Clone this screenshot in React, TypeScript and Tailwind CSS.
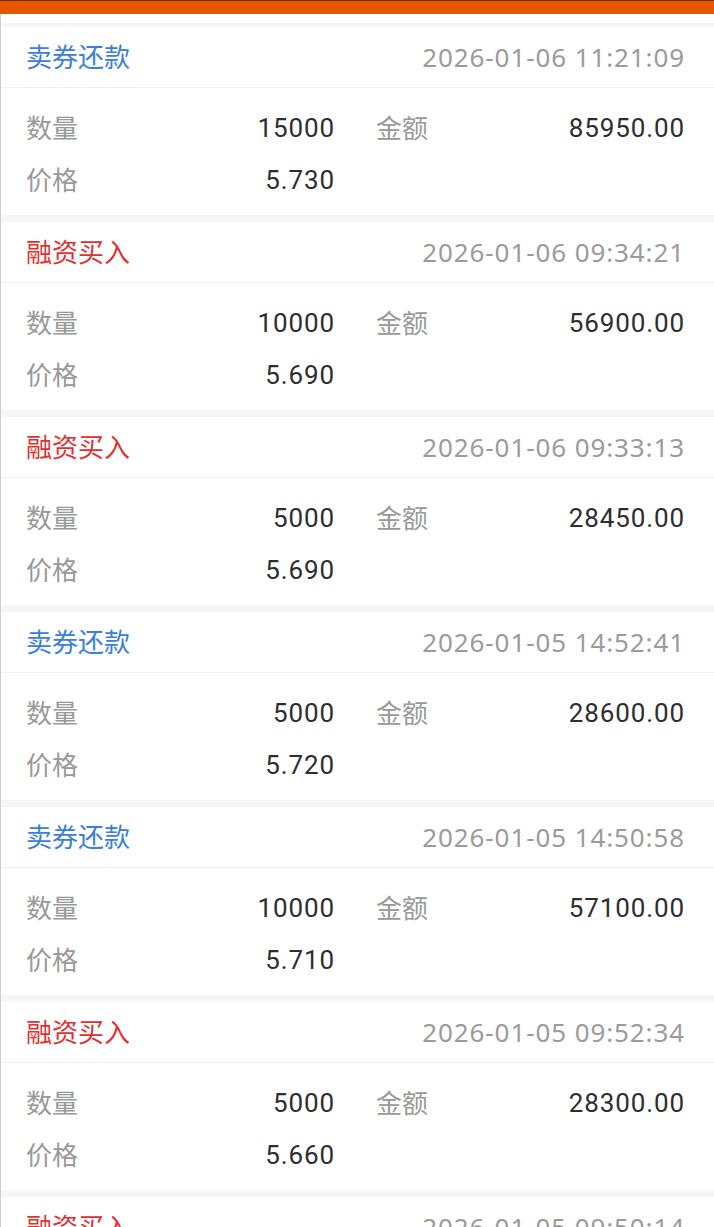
import React from "react";

type Rec = {
  type: "sell" | "buy";
  time: string;
  qty: string;
  amount: string;
  price: string;
};

const records: Rec[] = [
  { type: "sell", time: "2026-01-06 11:21:09", qty: "15000", amount: "85950.00", price: "5.730" },
  { type: "buy", time: "2026-01-06 09:34:21", qty: "10000", amount: "56900.00", price: "5.690" },
  { type: "buy", time: "2026-01-06 09:33:13", qty: "5000", amount: "28450.00", price: "5.690" },
  { type: "sell", time: "2026-01-05 14:52:41", qty: "5000", amount: "28600.00", price: "5.720" },
  { type: "sell", time: "2026-01-05 14:50:58", qty: "10000", amount: "57100.00", price: "5.710" },
  { type: "buy", time: "2026-01-05 09:52:34", qty: "5000", amount: "28300.00", price: "5.660" },
  { type: "buy", time: "2026-01-05 09:50:14", qty: "5000", amount: "28300.00", price: "5.660" },
];

const numFont = { fontFamily: 'Roboto, "Noto Sans", sans-serif' };

function Card({ r }: { r: Rec }) {
  return (
    <div className="bg-white">
      <div className="h-[61px] flex items-center justify-between pl-[25px] pr-[30px] border-b border-[#f0f0f0]">
        <span
          className={
            r.type === "sell"
              ? "text-[26px] leading-none text-[#3a80d9]"
              : "text-[26px] leading-none text-[#e0302f]"
          }
        >
          {r.type === "sell" ? "卖券还款" : "融资买入"}
        </span>
        <span className="text-[26px] leading-none text-[#9b9b9b] tracking-[0.9px] mr-[-1px]">{r.time}</span>
      </div>
      <div className="pl-[25px] pr-[30px] pt-[14px] pb-[9px] grid grid-cols-2 gap-x-[42px]">
        <div className="h-[52px] flex items-center justify-between">
          <span className="text-[26px] leading-none text-[#999]">数量</span>
          <span className="text-[26px] leading-none text-[#2e2e2e] tracking-[0.9px] mr-[-1px]" style={numFont}>
            {r.qty}
          </span>
        </div>
        <div className="h-[52px] flex items-center justify-between">
          <span className="text-[26px] leading-none text-[#999]">金额</span>
          <span className="text-[26px] leading-none text-[#2e2e2e] tracking-[0.9px] mr-[-1px]" style={numFont}>
            {r.amount}
          </span>
        </div>
        <div className="h-[52px] flex items-center justify-between">
          <span className="text-[26px] leading-none text-[#999]">价格</span>
          <span className="text-[26px] leading-none text-[#2e2e2e] tracking-[0.9px] mr-[-1px]" style={numFont}>
            {r.price}
          </span>
        </div>
        <div className="h-[52px]" />
      </div>
    </div>
  );
}

export default function App() {
  return (
    <div
      className="w-[714px] h-[1227px] overflow-hidden bg-white"
      style={{ fontFamily: '"Noto Sans", "Noto Sans CJK SC", sans-serif' }}
    >
      <div className="h-[14px] bg-[#e65500] border-t border-[#7a2a00]" />
      <div className="border-l border-[#cfcfcf]">
        <div className="h-[9px] bg-white" />
        <div className="bg-[#f5f6f8] pt-[4px] flex flex-col gap-[7px]">
          {records.map((r, i) => (
            <Card key={i} r={r} />
          ))}
        </div>
      </div>
    </div>
  );
}
